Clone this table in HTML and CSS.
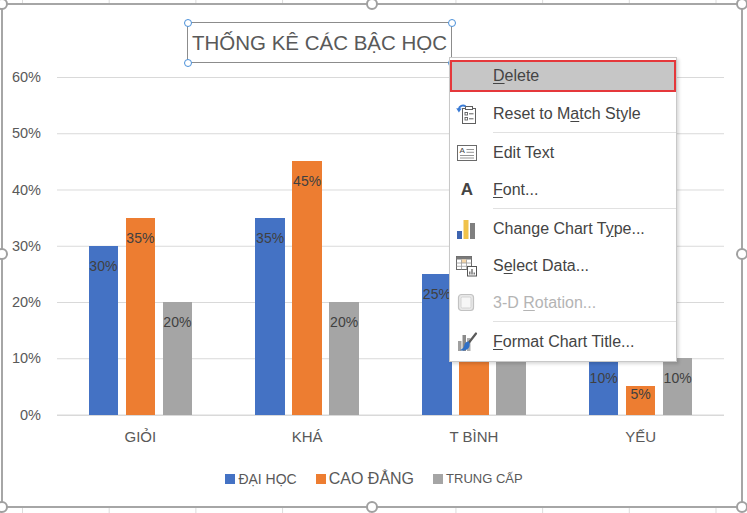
FILE: index.html
```html
<!DOCTYPE html>
<html lang="vi">
<head>
<meta charset="utf-8">
<title>Thống kê các bậc học</title>
<link rel="stylesheet" href="styles.css">
</head>
<body>
<div class="sheet">
  <div class="chart">
    <span class="handle h-tl"></span>
    <span class="handle h-tm"></span>
    <span class="handle h-tr"></span>
    <span class="handle h-ml"></span>
    <span class="handle h-mr"></span>
    <span class="handle h-bl"></span>
    <span class="handle h-bm"></span>
    <span class="handle h-br"></span>

    <div class="title-row">
      <div class="title">THỐNG KÊ CÁC BẬC HỌC
        <span class="th th-tl"></span>
        <span class="th th-tr"></span>
        <span class="th th-bl"></span>
        <span class="th th-br"></span>
      </div>
    </div>

    <div class="plot-row">
      <div class="y-axis">
        <span>60%</span><span>50%</span><span>40%</span><span>30%</span><span>20%</span><span>10%</span><span>0%</span>
      </div>
      <div class="plot">
        <div class="cat">
          <div class="bar blue" style="height:168.75px"><span class="lbl">30%</span></div>
          <div class="bar orange" style="height:196.875px"><span class="lbl">35%</span></div>
          <div class="bar gray" style="height:112.5px"><span class="lbl">20%</span></div>
        </div>
        <div class="cat">
          <div class="bar blue" style="height:196.875px"><span class="lbl">35%</span></div>
          <div class="bar orange" style="height:253.125px"><span class="lbl">45%</span></div>
          <div class="bar gray" style="height:112.5px"><span class="lbl">20%</span></div>
        </div>
        <div class="cat">
          <div class="bar blue" style="height:140.625px"><span class="lbl">25%</span></div>
          <div class="bar orange" style="height:112.5px"></div>
          <div class="bar gray" style="height:140.625px"></div>
        </div>
        <div class="cat">
          <div class="bar blue" style="height:56.25px"><span class="lbl">10%</span></div>
          <div class="bar orange short" style="height:28.125px"><span class="lbl">5%</span></div>
          <div class="bar gray" style="height:56.25px"><span class="lbl">10%</span></div>
        </div>
      </div>
    </div>

    <div class="x-axis">
      <span>GIỎI</span><span>KHÁ</span><span>T BÌNH</span><span>YẾU</span>
    </div>

    <div class="legend">
      <div class="key"><span class="sw blue"></span><span class="kt">ĐẠI HỌC</span></div>
      <div class="key"><span class="sw orange"></span><span class="kt big">CAO ĐẲNG</span></div>
      <div class="key"><span class="sw gray"></span><span class="kt small">TRUNG CẤP</span></div>
    </div>
  </div>

  <div class="menu">
    <div class="item hot">
      <span class="ic"></span>
      <span class="tx"><u>D</u>elete</span>
    </div>
    <div class="item">
      <span class="ic">
        <svg viewBox="0 0 22 22" width="22" height="22">
          <rect x="6.5" y="5.5" width="13" height="15" fill="#fff" stroke="#5f5f5f"/>
          <rect x="9.5" y="3.5" width="7" height="3" fill="#fff" stroke="#5f5f5f"/>
          <rect x="9" y="9.5" width="2.5" height="2.5" fill="none" stroke="#5f5f5f" stroke-width=".9"/>
          <path d="M13 10.8h4.5" stroke="#5f5f5f"/>
          <rect x="9" y="14.5" width="2.5" height="2.5" fill="none" stroke="#5f5f5f" stroke-width=".9"/>
          <path d="M13 15.8h4.5" stroke="#5f5f5f"/>
          <path d="M9.5 3.2C6.5 1.6 3.4 3 2.8 6.2" stroke="#3a7bd5" stroke-width="2" fill="none"/>
          <path d="M0.2 5.2l2.7 4.2 2.8-3.8z" fill="#3a7bd5"/>
        </svg>
      </span>
      <span class="tx">Reset to M<u>a</u>tch Style</span>
    </div>
    <div class="sep"></div>
    <div class="item">
      <span class="ic">
        <svg viewBox="0 0 22 22" width="22" height="22">
          <rect x="1.5" y="3.5" width="19" height="15" fill="#fff" stroke="#6a6a6a"/>
          <text x="3.6" y="11.3" font-size="8" font-family="Liberation Sans, sans-serif" fill="#444">A</text>
          <path d="M10.5 7.5h7.5M10.5 10.3h7.5M4 13.5h14M4 16h14" stroke="#8a8a8a" stroke-width=".9"/>
        </svg>
      </span>
      <span class="tx">Edit Text</span>
    </div>
    <div class="item">
      <span class="ic"><span class="font-a">A</span></span>
      <span class="tx"><u>F</u>ont...</span>
    </div>
    <div class="sep"></div>
    <div class="item">
      <span class="ic">
        <svg viewBox="0 0 22 22" width="22" height="22">
          <rect x="1" y="13" width="5" height="8" fill="#3d64b0"/>
          <rect x="7.5" y="2" width="5" height="19" fill="#f0c24a"/>
          <rect x="14" y="5" width="5" height="16" fill="#7f7f7f"/>
        </svg>
      </span>
      <span class="tx">Change Chart T<u>y</u>pe...</span>
    </div>
    <div class="item">
      <span class="ic">
        <svg viewBox="0 0 22 22" width="22" height="22">
          <rect x="0.5" y="1.5" width="15" height="13" fill="#fff" stroke="#6a6a6a"/>
          <rect x="0.5" y="1.5" width="15" height="3" fill="#7a7a7a"/>
          <rect x="5.5" y="4.5" width="5" height="3.5" fill="#f6d6a8"/>
          <path d="M0.5 8h15M0.5 11.3h15M5.5 4.5v10M10.5 4.5v10" stroke="#9a9a9a" stroke-width=".8"/>
          <rect x="11.5" y="11.5" width="9" height="9.5" fill="#fff" stroke="#555"/>
          <path d="M13.8 19.5v-3M16 19.5v-5.5M18.2 19.5v-2" stroke="#555" stroke-width="1.2"/>
        </svg>
      </span>
      <span class="tx">S<u>e</u>lect Data...</span>
    </div>
    <div class="item disabled">
      <span class="ic">
        <svg viewBox="0 0 22 22" width="22" height="22">
          <rect x="2.5" y="2.5" width="15" height="16" rx="3" fill="#e8e8e8" stroke="#c2c2c2" stroke-width="1.2"/>
          <rect x="5" y="5" width="10" height="11" rx="1.5" fill="#f6f6f6" stroke="#d4d4d4"/>
        </svg>
      </span>
      <span class="tx">3-D <u>R</u>otation...</span>
    </div>
    <div class="sep"></div>
    <div class="item">
      <span class="ic">
        <svg viewBox="0 0 22 22" width="22" height="22">
          <rect x="2" y="10" width="3.5" height="10" fill="#a0a0a0"/>
          <rect x="6.5" y="4" width="3.5" height="16" fill="#8a8a8a"/>
          <rect x="11" y="7" width="3.5" height="13" fill="#b0b0b0"/>
          <path d="M20 2.5L13 11.5" stroke="#5a5a5a" stroke-width="2.2" stroke-linecap="round"/>
          <path d="M12.6 10.6c-2 -.3 -4 1.6 -4.3 3.8c-.3 2 -2 3.6 -4.3 4.6c3.3 1.3 8.3 .3 9.4 -3.5c.5 -1.8 .4 -3.7 -.8 -4.9z" fill="#2f6fc6"/>
        </svg>
      </span>
      <span class="tx"><u>F</u>ormat Chart Title...</span>
    </div>
  </div>
</div>
</body>
</html>
```

FILE: styles.css
```css
* {
  box-sizing: border-box;
}

html,
body {
  margin: 0;
  padding: 0;
}

body {
  width: 747px;
  height: 513px;
  overflow: hidden;
  background-color: #fff;
  background-image: linear-gradient(to right, #dcdcdc 1px, transparent 1px);
  background-size: 86.7px 100%;
  background-position: 22px 0;
  font-family: "Liberation Sans", Arial, sans-serif;
}

.sheet {
  position: relative;
  width: 747px;
  height: 513px;
  padding: 3px 0 0 1px;
}

/* ---------- chart frame ---------- */
.chart {
  position: relative;
  width: 742px;
  height: 505px;
  border: 2px solid #a6a6a6;
  background: #fff;
  color: #595959;
}

.handle {
  position: absolute;
  width: 12px;
  height: 12px;
  border-radius: 50%;
  border: 2px solid #a0a0a0;
  background: #fff;
  z-index: 2;
}
.h-tl { left: -7px; top: -7px; }
.h-tm { left: 363px; top: -7px; }
.h-tr { left: 733px; top: -7px; }
.h-ml { left: -7px; top: 243px; }
.h-mr { left: 733px; top: 243px; }
.h-bl { left: -7px; top: 496px; }
.h-bm { left: 363px; top: 496px; }
.h-br { left: 733px; top: 496px; }

/* ---------- title ---------- */
.title-row {
  padding-top: 17px;
}

.title {
  position: relative;
  margin-left: 184px;
  width: 265px;
  height: 41px;
  border: 1px solid #8c8c8c;
  display: flex;
  align-items: center;
  justify-content: center;
  font-size: 20.5px;
  color: #595959;
  white-space: nowrap;
}

.th {
  position: absolute;
  width: 8px;
  height: 8px;
  border-radius: 50%;
  border: 1.5px solid #4a90d9;
  background: #fff;
}
.th-tl { left: -4.5px; top: -4.5px; }
.th-tr { right: -4.5px; top: -4.5px; }
.th-bl { left: -4.5px; bottom: -4.5px; }
.th-br { right: -4.5px; bottom: -4.5px; }

/* ---------- plot ---------- */
.plot-row {
  display: flex;
  align-items: flex-start;
  margin-top: 4px;
}

.y-axis {
  width: 38px;
  display: flex;
  flex-direction: column;
  gap: 36.25px;
  text-align: right;
  font-size: 14.5px;
}
.y-axis span {
  height: 20px;
  line-height: 20px;
}

.plot {
  margin-left: 16px;
  margin-top: 10px;
  width: 667px;
  height: 338.5px;
  display: flex;
  border-bottom: 1px solid #d9d9d9;
  background-image: linear-gradient(#d9d9d9 1px, transparent 1px);
  background-size: 100% 56.25px;
}

.cat {
  flex: 1;
  display: flex;
  justify-content: center;
  align-items: flex-end;
  gap: 7.5px;
}

.bar {
  width: 29.5px;
  display: flex;
  justify-content: center;
}

.blue { background: #4472c4; }
.orange { background: #ed7d31; }
.gray { background: #a5a5a5; }

.lbl {
  margin-top: 12px;
  height: 17px;
  line-height: 17px;
  font-size: 14px;
  color: #404040;
  white-space: nowrap;
}
.bar.short .lbl {
  margin-top: 0;
}

/* ---------- x axis ---------- */
.x-axis {
  display: flex;
  margin: 2px 0 0 54px;
  width: 667px;
}
.x-axis span {
  flex: 1;
  text-align: center;
  line-height: 20px;
  font-size: 15px;
}

/* ---------- legend ---------- */
.legend {
  display: flex;
  justify-content: center;
  align-items: center;
  gap: 19px;
  margin-top: 22.5px;
  padding-left: 4px;
  height: 20px;
}
.key {
  display: flex;
  align-items: center;
  gap: 3px;
}
.sw {
  width: 10px;
  height: 10px;
}
.kt {
  font-size: 14px;
  line-height: 20px;
}
.kt.big {
  font-size: 16px;
}
.kt.small {
  font-size: 13px;
}

/* ---------- context menu ---------- */
.menu {
  position: absolute;
  left: 449px;
  top: 57px;
  width: 228px;
  height: 305px;
  background: #fff;
  border: 1px solid #c8c8c8;
  box-shadow: 2px 2px 3px rgba(0, 0, 0, 0.15);
  padding: 0 0 1px 0;
  z-index: 5;
  font-size: 16px;
  color: #444;
}

.item {
  height: 37px;
  display: grid;
  grid-template-columns: 43px 1fr;
  align-items: center;
}

.item.hot {
  height: 32px;
  margin: 2px 0 3px 0;
  border: 2px solid #e5383b;
  background: #c6c6c6;
  grid-template-columns: 41px 1fr;
}

.ic {
  display: flex;
  align-items: center;
  padding-left: 6px;
  height: 22px;
}
.ic svg {
  display: block;
}

.font-a {
  display: block;
  width: 22px;
  text-align: center;
  font-weight: bold;
  font-size: 17px;
  color: #444;
}

.tx u {
  text-underline-offset: 2px;
}

.item.disabled {
  color: #b4b4b4;
}

.sep {
  height: 1px;
  background: #e1e1e1;
  margin: 0 0 1px 43px;
}
```
